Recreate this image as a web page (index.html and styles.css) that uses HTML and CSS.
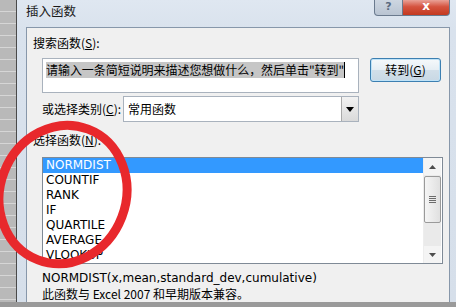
FILE: index.html
```html
<!DOCTYPE html>
<html>
<head>
<meta charset="utf-8">
<link rel="stylesheet" href="styles.css">
</head>
<body>
<div class="screen">
  <div class="sheet"></div>
  <div class="window">
    <div class="titlebar">
      <span class="title">插入函数</span>
      <div class="caption-btns">
        <div class="cbtn help">?</div>
        <div class="cbtn close">x</div>
      </div>
    </div>
    <div class="panel">
      <div class="label">搜索函数(<u>S</u>):</div>
      <div class="search-row">
        <div class="search-box"><span class="sel">请输入一条简短说明来描述您想做什么，然后单击"转到"</span><span class="caret"></span></div>
        <div class="goto-btn">转到(<u>G</u>)</div>
      </div>
      <div class="cat-row">
        <span class="cat-label">或选择类别(<u>C</u>):</span>
        <div class="combo">
          <span class="combo-text">常用函数</span>
          <div class="combo-btn"><svg width="8" height="5" viewBox="0 0 8 5"><path d="M0 0H8L4 5Z" fill="#000"/></svg></div>
        </div>
      </div>
      <div class="label label2">选择函数(<u>N</u>):</div>
      <div class="listbox">
        <div class="items">
          <div class="item selected">NORMDIST</div>
          <div class="item">COUNTIF</div>
          <div class="item">RANK</div>
          <div class="item">IF</div>
          <div class="item">QUARTILE</div>
          <div class="item">AVERAGE</div>
          <div class="item">VLOOKUP</div>
        </div>
        <div class="scrollbar">
          <div class="sb-arrow"><svg width="7" height="4" viewBox="0 0 7 4"><path d="M0 4H7L3.5 0Z" fill="#4d4d4d"/></svg></div>
          <div class="sb-track">
            <div class="sb-thumb"><span></span><span></span><span></span><span></span></div>
          </div>
          <div class="sb-arrow"><svg width="7" height="4" viewBox="0 0 7 4"><path d="M0 0H7L3.5 4Z" fill="#4d4d4d"/></svg></div>
        </div>
      </div>
      <div class="syntax">NORMDIST(x,mean,standard_dev,cumulative)</div>
      <div class="desc">此函数与 Excel 2007 和早期版本兼容。</div>
    </div>
  </div>
</div>
<svg class="circle" width="456" height="307" viewBox="0 0 456 307">
  <ellipse cx="0" cy="0" rx="63" ry="70" transform="translate(63 194.5) rotate(21)" fill="none" stroke="#e8282c" stroke-width="9"/>
</svg>
</body>
</html>
```

FILE: styles.css
```css
html, body {
  margin: 0;
  padding: 0;
}
body {
  width: 456px;
  height: 307px;
  overflow: hidden;
  position: relative;
  background: #9a9a9a;
  font-family: "DejaVu Sans", "Noto Sans CJK SC", sans-serif;
  font-size: 12px;
  color: #000;
}
u { text-decoration: underline; text-underline-offset: 1px; }
.screen {
  display: flex;
  height: 302px;
}
.sheet {
  width: 16px;
  flex-shrink: 0;
  background-color: #b9b9b9;
  background-image: repeating-linear-gradient(to bottom, #b9b9b9 0, #b9b9b9 11px, #d6d6d6 11px, #d6d6d6 12px);
  border-right: 1px solid #4a4a4a;
}
.window {
  flex: 1;
  display: flex;
  flex-direction: column;
  background: linear-gradient(to bottom, #dfe7f1 0, #d9e2ed 30px, #d6dfea 100%);
  padding: 0 6px 0 9px;
}
.titlebar {
  height: 27px;
  flex-shrink: 0;
  display: flex;
  align-items: flex-start;
}
.title {
  font-family: "Noto Sans CJK SC", sans-serif;
  font-size: 12.5px;
  line-height: 16px;
  margin-top: 3px;
  color: #1a1a1a;
}
.caption-btns {
  margin-left: auto;
  display: flex;
}
.cbtn {
  height: 16px;
  line-height: 13px;
  text-align: center;
  font-family: "DejaVu Sans", sans-serif;
  font-weight: bold;
  font-size: 11px;
  border: 1px solid #6a7a8e;
  border-top: none;
  box-sizing: border-box;
}
.help {
  width: 29px;
  border-radius: 0 0 0 4px;
  background: linear-gradient(to bottom, #cdd6e1, #b9c4d2);
  color: #5a6a80;
}
.close {
  width: 47px;
  border-left: none;
  border-radius: 0 0 4px 0;
  background: linear-gradient(to bottom, #e9a197 0, #d5533f 45%, #c3391f 100%);
  color: #fff;
  font-size: 12px;
}
.panel {
  flex: 1;
  min-height: 0;
  overflow: hidden;
  background: #f0f0f0;
  border: 1px solid #8797aa;
  border-bottom: none;
  padding: 7px 0 0 6px;
  font-family: "Noto Sans CJK SC", sans-serif;
}
.label {
  line-height: 16px;
  height: 16px;
}
.search-row {
  display: flex;
  align-items: flex-start;
  margin: 7px 0 0 9px;
  gap: 11px;
}
.search-box {
  width: 317px;
  height: 35px;
  box-sizing: border-box;
  background: #fff;
  border: 1px solid #a9b2bd;
  padding: 3px 0 0 3px;
  line-height: 16px;
  font-size: 12px;
  white-space: nowrap;
  display: flex;
  align-items: flex-start;
}
.sel {
  background: #c6c6c6;
  letter-spacing: -0.05px;
}
.caret {
  display: inline-block;
  width: 1px;
  height: 16px;
  background: #000;
}
.goto-btn {
  width: 71px;
  height: 24px;
  box-sizing: border-box;
  border: 1px solid #3c7fb1;
  border-radius: 3px;
  background: linear-gradient(to bottom, #f6f9fb 0, #e6eef4 48%, #d2dfe9 52%, #c8d8e4 100%);
  box-shadow: inset 0 0 0 1px #bfe3f8;
  text-align: center;
  line-height: 22px;
  font-size: 12px;
}
.cat-row {
  display: flex;
  align-items: center;
  margin: 3px 0 0 9px;
  height: 26px;
}
.cat-label {
  width: 81px;
  line-height: 16px;
}
.combo {
  width: 236px;
  height: 26px;
  box-sizing: border-box;
  border: 1px solid #a9b2bd;
  background: #fff;
  display: flex;
  align-items: center;
}
.combo-text {
  flex: 1;
  padding-left: 4px;
  line-height: 16px;
}
.combo-btn {
  width: 17px;
  height: 24px;
  box-sizing: border-box;
  border-left: 1px solid #a9a9a9;
  background: linear-gradient(to bottom, #f2f2f2, #dadada);
  display: flex;
  align-items: center;
  justify-content: center;
}
.label2 {
  margin-top: 10px;
}
.listbox {
  margin: 9px 0 0 9px;
  width: 401px;
  height: 107px;
  box-sizing: border-box;
  border: 1px solid #7f8a96;
  background: #fff;
  display: flex;
  padding: 0 1px 0 0;
}
.items {
  flex: 1;
  overflow: hidden;
  font-family: "DejaVu Sans", sans-serif;
  font-size: 12px;
}
.item {
  height: 15px;
  line-height: 15px;
  padding-left: 3px;
}
.item.selected {
  background: #3399ff;
  color: #fff;
}
.scrollbar {
  width: 17px;
  display: flex;
  flex-direction: column;
  background: #f0f0f0;
  border-left: 1px solid #ededed;
}
.sb-arrow {
  height: 17px;
  display: flex;
  align-items: center;
  justify-content: center;
  background: #f4f4f4;
}
.sb-track {
  flex: 1;
  padding-top: 1px;
  background: #eaeaea;
}
.sb-thumb {
  height: 47px;
  box-sizing: border-box;
  border: 1px solid #9a9a9a;
  border-radius: 2px;
  background: linear-gradient(to right, #f5f5f5, #e0e0e0);
  display: flex;
  flex-direction: column;
  justify-content: center;
  align-items: center;
  gap: 1px;
}
.sb-thumb span {
  display: block;
  width: 7px;
  height: 1px;
  background: #6b6b6b;
}
.syntax {
  font-family: "DejaVu Sans", sans-serif;
  margin: 6px 0 0 9px;
  line-height: 16px;
  font-size: 12px;
}
.desc {
  margin: 0 0 0 9px;
  line-height: 16px;
  font-size: 12px;
}
.circle {
  position: absolute;
  left: 0;
  top: 0;
  pointer-events: none;
}
```
